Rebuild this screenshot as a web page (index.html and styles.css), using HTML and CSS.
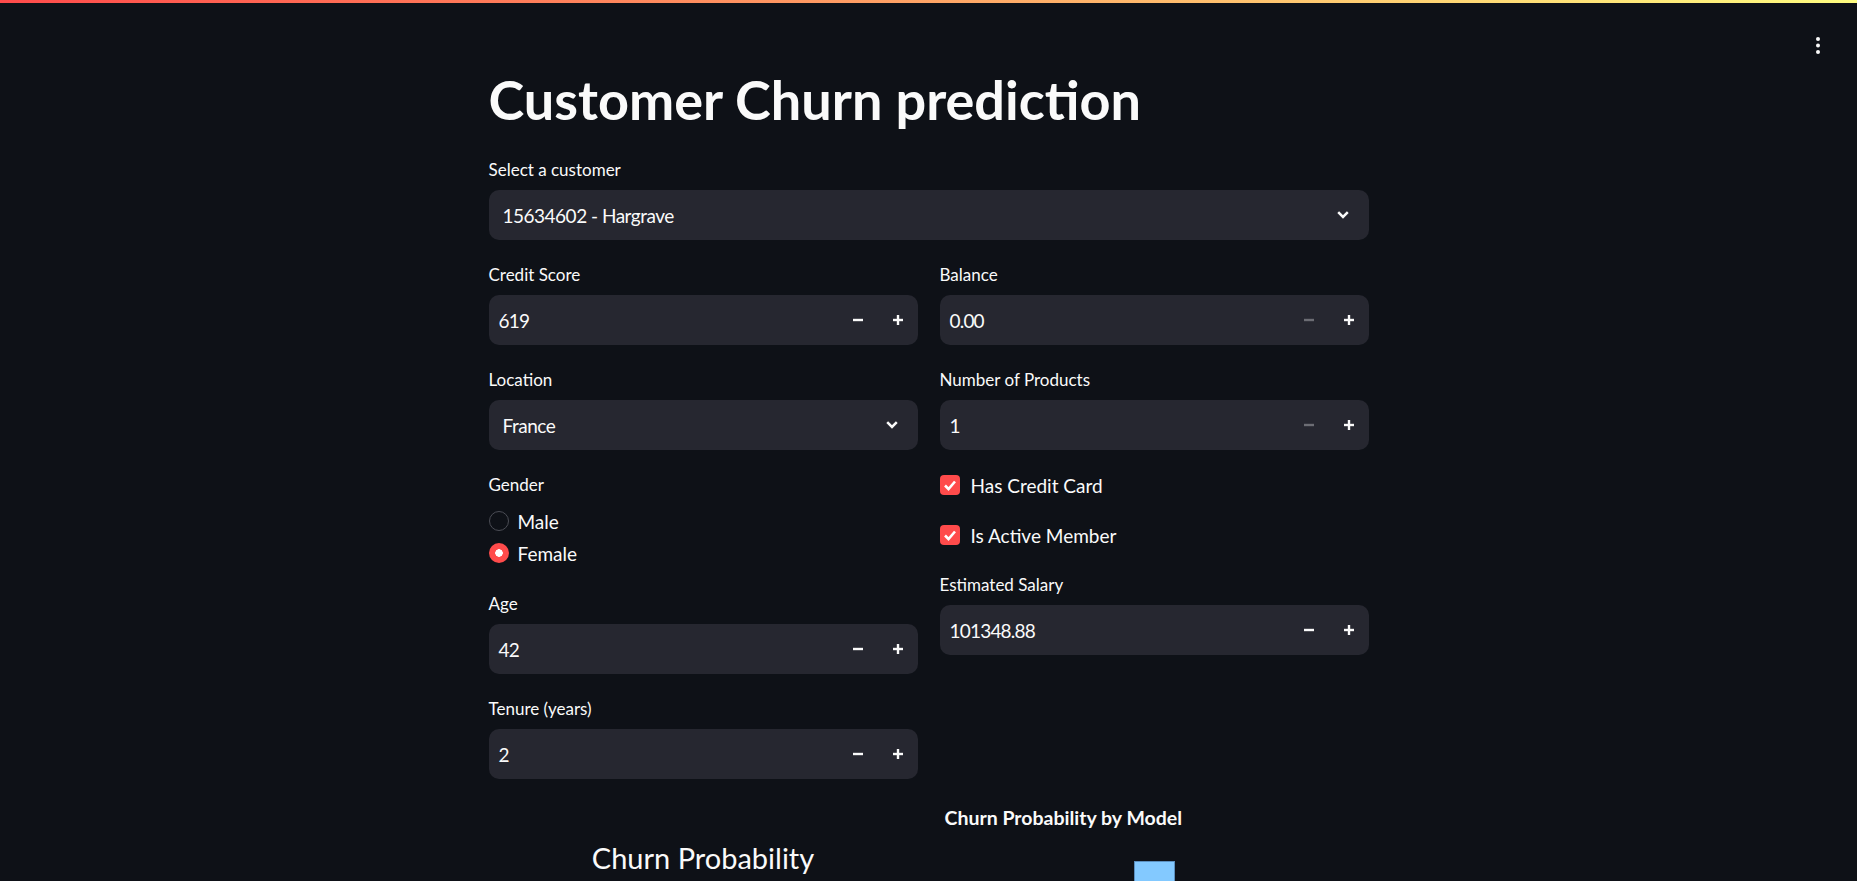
FILE: index.html
```html
<!DOCTYPE html>
<html lang="en">
<head>
  <meta charset="UTF-8" />
  <title>Customer Churn prediction</title>
  <link rel="stylesheet" href="styles.css">
</head>
<body>

<div class="decoration"></div>

<button class="menu-btn" aria-label="Main menu">
  <svg width="4" height="17" viewBox="0 0 4 17"><circle cx="2" cy="2" r="2" fill="#fafafa"/><circle cx="2" cy="8.5" r="2" fill="#fafafa"/><circle cx="2" cy="15" r="2" fill="#fafafa"/></svg>
</button>

<main class="block">
  <h1 class="title">Customer Churn prediction</h1>

  <div class="widget">
    <div class="label">Select a customer</div>
    <div class="select">
      <span>15634602 - Hargrave</span>
      <svg class="chevron" width="12" height="8" viewBox="0 0 12 8"><polyline points="1.2,1.2 6,6 10.8,1.2" fill="none" stroke="#fafafa" stroke-width="2.5"/></svg>
    </div>
  </div>

  <div class="columns">
    <div class="col">
      <div class="widget">
        <div class="label">Credit Score</div>
        <div class="number">
          <span class="value">619</span>
          <span class="step"><svg width="10" height="10" viewBox="0 0 10 10"><line x1="0" y1="5" x2="10" y2="5" stroke="currentColor" stroke-width="2.4"/></svg></span>
          <span class="step"><svg width="10" height="10" viewBox="0 0 10 10"><line x1="0" y1="5" x2="10" y2="5" stroke="currentColor" stroke-width="2.4"/><line x1="5" y1="0" x2="5" y2="10" stroke="currentColor" stroke-width="2.4"/></svg></span>
        </div>
      </div>

      <div class="widget">
        <div class="label">Location</div>
        <div class="select">
          <span>France</span>
          <svg class="chevron" width="12" height="8" viewBox="0 0 12 8"><polyline points="1.2,1.2 6,6 10.8,1.2" fill="none" stroke="#fafafa" stroke-width="2.5"/></svg>
        </div>
      </div>

      <div class="widget">
        <div class="label">Gender</div>
        <div class="radios">
          <div class="radio"><span class="dot"></span>Male</div>
          <div class="radio"><span class="dot on"></span>Female</div>
        </div>
      </div>

      <div class="widget">
        <div class="label">Age</div>
        <div class="number">
          <span class="value">42</span>
          <span class="step"><svg width="10" height="10" viewBox="0 0 10 10"><line x1="0" y1="5" x2="10" y2="5" stroke="currentColor" stroke-width="2.4"/></svg></span>
          <span class="step"><svg width="10" height="10" viewBox="0 0 10 10"><line x1="0" y1="5" x2="10" y2="5" stroke="currentColor" stroke-width="2.4"/><line x1="5" y1="0" x2="5" y2="10" stroke="currentColor" stroke-width="2.4"/></svg></span>
        </div>
      </div>

      <div class="widget">
        <div class="label">Tenure (years)</div>
        <div class="number">
          <span class="value">2</span>
          <span class="step"><svg width="10" height="10" viewBox="0 0 10 10"><line x1="0" y1="5" x2="10" y2="5" stroke="currentColor" stroke-width="2.4"/></svg></span>
          <span class="step"><svg width="10" height="10" viewBox="0 0 10 10"><line x1="0" y1="5" x2="10" y2="5" stroke="currentColor" stroke-width="2.4"/><line x1="5" y1="0" x2="5" y2="10" stroke="currentColor" stroke-width="2.4"/></svg></span>
        </div>
      </div>
    </div>

    <div class="col">
      <div class="widget">
        <div class="label">Balance</div>
        <div class="number">
          <span class="value">0.00</span>
          <span class="step off"><svg width="10" height="10" viewBox="0 0 10 10"><line x1="0" y1="5" x2="10" y2="5" stroke="currentColor" stroke-width="2.4"/></svg></span>
          <span class="step"><svg width="10" height="10" viewBox="0 0 10 10"><line x1="0" y1="5" x2="10" y2="5" stroke="currentColor" stroke-width="2.4"/><line x1="5" y1="0" x2="5" y2="10" stroke="currentColor" stroke-width="2.4"/></svg></span>
        </div>
      </div>

      <div class="widget">
        <div class="label">Number of Products</div>
        <div class="number">
          <span class="value">1</span>
          <span class="step off"><svg width="10" height="10" viewBox="0 0 10 10"><line x1="0" y1="5" x2="10" y2="5" stroke="currentColor" stroke-width="2.4"/></svg></span>
          <span class="step"><svg width="10" height="10" viewBox="0 0 10 10"><line x1="0" y1="5" x2="10" y2="5" stroke="currentColor" stroke-width="2.4"/><line x1="5" y1="0" x2="5" y2="10" stroke="currentColor" stroke-width="2.4"/></svg></span>
        </div>
      </div>

      <div class="check">
        <span class="box"><svg width="20" height="20" viewBox="0 0 20 20"><polyline points="5,10.5 8.5,14 15,6.5" fill="none" stroke="#fff" stroke-width="2.6"/></svg></span>
        Has Credit Card
      </div>

      <div class="check">
        <span class="box"><svg width="20" height="20" viewBox="0 0 20 20"><polyline points="5,10.5 8.5,14 15,6.5" fill="none" stroke="#fff" stroke-width="2.6"/></svg></span>
        Is Active Member
      </div>

      <div class="widget">
        <div class="label">Estimated Salary</div>
        <div class="number">
          <span class="value">101348.88</span>
          <span class="step"><svg width="10" height="10" viewBox="0 0 10 10"><line x1="0" y1="5" x2="10" y2="5" stroke="currentColor" stroke-width="2.4"/></svg></span>
          <span class="step"><svg width="10" height="10" viewBox="0 0 10 10"><line x1="0" y1="5" x2="10" y2="5" stroke="currentColor" stroke-width="2.4"/><line x1="5" y1="0" x2="5" y2="10" stroke="currentColor" stroke-width="2.4"/></svg></span>
        </div>
      </div>
    </div>
  </div>

  <div class="columns charts">
    <div class="gauge">
      <div class="gauge-title">Churn Probability</div>
    </div>
    <div class="bars">
      <div class="bars-title">Churn Probability by Model</div>
      <div class="bar"></div>
    </div>
  </div>
</main>

</body>
</html>
```

FILE: styles.css
```css
* {
  box-sizing: border-box;
}
body {
  margin: 0;
  background: #0e1117;
  color: #fafafa;
  font-family: Lato, "Open Sans", sans-serif;
}
.decoration {
  position: fixed;
  top: 0;
  left: 0;
  right: 0;
  height: 3px;
  background: linear-gradient(90deg, #ff4b4b, #fffd80);
}
.menu-btn {
  position: absolute;
  top: 37px;
  right: 37px;
  padding: 0;
  border: none;
  background: none;
  line-height: 0;
  cursor: pointer;
}
.block {
  width: 880px;
  margin: 0 auto;
  padding-top: 68px;
}
.title {
  margin: 0 0 23px;
  font-size: 54px;
  line-height: 64px;
  font-weight: 700;
}
.widget {
  display: flex;
  flex-direction: column;
}
.label {
  height: 30px;
  margin-bottom: 5px;
  font-size: 17px;
  line-height: 30px;
}
.select {
  display: flex;
  align-items: center;
  justify-content: space-between;
  height: 50px;
  padding: 0 20px 0 14px;
  background: #262730;
  border-radius: 10px;
  font-size: 19px;
  letter-spacing: -0.5px;
}
.number {
  display: flex;
  align-items: center;
  height: 50px;
  padding-left: 10px;
  background: #262730;
  border-radius: 10px;
  font-size: 19px;
}
.number .value {
  flex: 1;
  letter-spacing: -0.8px;
}
.step {
  display: flex;
  align-items: center;
  justify-content: center;
  width: 40px;
  height: 100%;
  color: #fafafa;
}
.step.off {
  color: #6c6d74;
}
.columns {
  display: grid;
  grid-template-columns: 1fr 1fr;
  gap: 22px;
  margin-top: 20px;
}
.col {
  display: flex;
  flex-direction: column;
  gap: 20px;
}
.radios {
  display: flex;
  flex-direction: column;
}
.radio {
  display: flex;
  align-items: center;
  gap: 9px;
  height: 32px;
  font-size: 19px;
}
.dot {
  width: 20px;
  height: 20px;
  border-radius: 50%;
  border: 1.5px solid #4b4d55;
  background: #0e1117;
}
.dot.on {
  border: none;
  background: #ff4b4b radial-gradient(circle, #fff 0 3.5px, transparent 4px);
}
.check {
  display: flex;
  align-items: center;
  gap: 11px;
  height: 30px;
  font-size: 19px;
}
.box {
  width: 20px;
  height: 20px;
  border-radius: 4px;
  background: #ff4b4b;
  line-height: 0;
}
.charts {
  height: 120px;
}
.gauge {
  padding-top: 41px;
  text-align: center;
}
.gauge-title {
  font-size: 29px;
  line-height: 35px;
}
.bars {
  padding: 6px 0 0 5px;
}
.bars-title {
  font-size: 19.5px;
  line-height: 25px;
  font-weight: 700;
}
.bar {
  width: 41px;
  height: 60px;
  margin: 31px 0 0 189px;
  background: #83c9ff;
  border: 1px solid #5b8fbf;
}
```
